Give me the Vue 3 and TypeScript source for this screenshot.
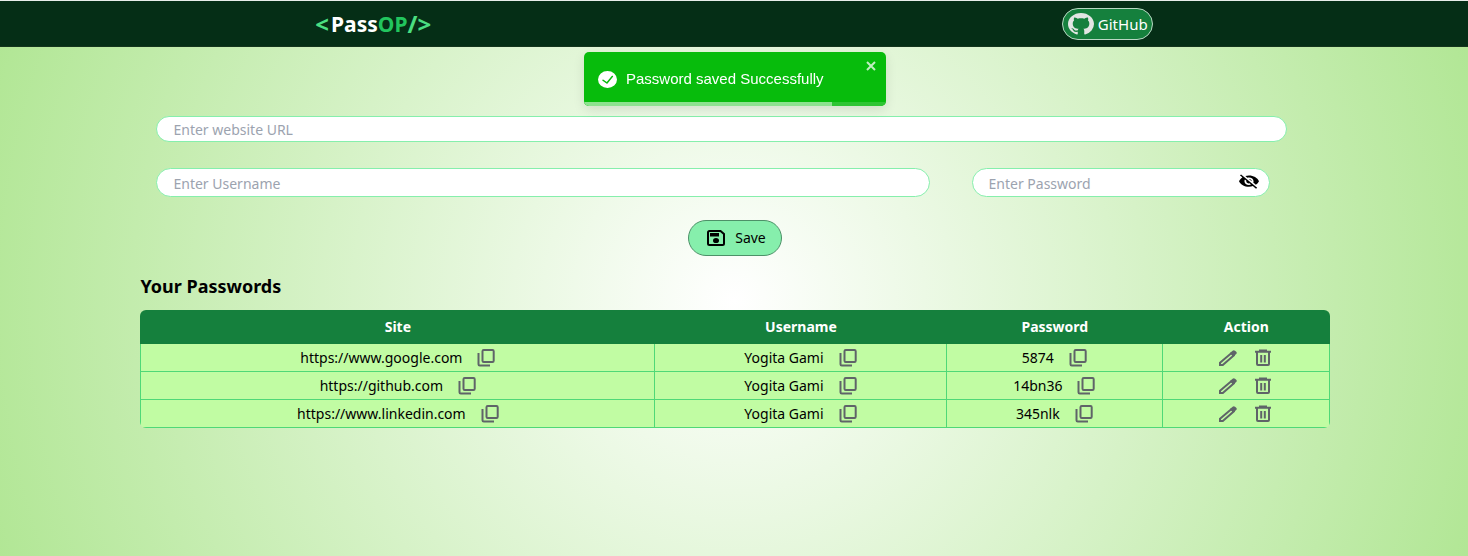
<script setup lang="ts">
import { ref } from 'vue'

interface Entry {
  site: string
  username: string
  password: string
}

const form = ref<Entry>({ site: '', username: '', password: '' })
const columns = ['Site', 'Username', 'Password', 'Action']
const fields: (keyof Entry)[] = ['site', 'username', 'password']
const entries = ref<Entry[]>([
  { site: 'https://www.google.com', username: 'Yogita Gami', password: '5874' },
  { site: 'https://github.com', username: 'Yogita Gami', password: '14bn36' },
  { site: 'https://www.linkedin.com', username: 'Yogita Gami', password: '345nlk' },
])
</script>

<template>
  <div class="page">
    <header class="nav">
      <div class="logo"><span class="bracket open">&lt;</span>Pass<span class="op">OP</span><span class="bracket">/&gt;</span></div>
      <button class="github" type="button">
        <svg class="github-icon" viewBox="0 0 16 16" preserveAspectRatio="none" aria-hidden="true">
          <path d="M8 0C3.58 0 0 3.58 0 8c0 3.54 2.29 6.53 5.47 7.59.4.07.55-.17.55-.38 0-.19-.01-.82-.01-1.49-2.01.37-2.53-.49-2.69-.94-.09-.23-.48-.94-.82-1.13-.28-.15-.68-.52-.01-.53.63-.01 1.08.58 1.23.82.72 1.21 1.87.87 2.33.66.07-.52.28-.87.51-1.07-1.78-.2-3.64-.89-3.64-3.95 0-.87.31-1.59.82-2.15-.08-.2-.36-1.02.08-2.12 0 0 .67-.21 2.2.82.64-.18 1.32-.27 2-.27s1.36.09 2 .27c1.53-1.04 2.2-.82 2.2-.82.44 1.1.16 1.92.08 2.12.51.56.82 1.27.82 2.15 0 3.07-1.87 3.75-3.65 3.95.29.25.54.73.54 1.48 0 1.07-.01 1.93-.01 2.2 0 .21.15.46.55.38A8.01 8.01 0 0 0 16 8c0-4.42-3.58-8-8-8z" />
        </svg>
        <span>GitHub</span>
      </button>
    </header>

    <div class="toast" role="status">
      <svg class="toast-check" viewBox="0 0 24 24" preserveAspectRatio="none" aria-hidden="true">
        <path d="M12 0a12 12 0 1 0 12 12A12 12 0 0 0 12 0zm6.93 8.2-6.85 9.29a1 1 0 0 1-1.43.19l-4.89-3.91a1 1 0 0 1-.15-1.41A1 1 0 0 1 7 12.21l4.08 3.26L17.32 7a1 1 0 0 1 1.39-.22 1 1 0 0 1 .22 1.42z" />
      </svg>
      <span>Password saved Successfully</span>
      <button class="toast-close" type="button" aria-label="Close">
        <svg viewBox="0 0 10 10" aria-hidden="true"><path d="M1 1l8 8M9 1L1 9" /></svg>
      </button>
      <div class="progress"><div class="progress-bar"></div></div>
    </div>

    <main class="content">
      <form class="form" @submit.prevent>
        <input v-model="form.site" class="field site" type="text" placeholder="Enter website URL" aria-label="Website URL" />
        <div class="row">
          <input v-model="form.username" class="field" type="text" placeholder="Enter Username" aria-label="Username" />
          <div class="password">
            <input v-model="form.password" class="field" type="password" placeholder="Enter Password" aria-label="Password" />
            <button class="eye" type="button" aria-label="Show password">
              <svg viewBox="0 0 22 20" preserveAspectRatio="none" aria-hidden="true">
                <path d="M11 4.500c2.760 0 5 2.240 5 5 0 .65-.13 1.260-.36 1.830l2.920 2.920c1.510-1.260 2.700-2.890 3.430-4.750-1.730-4.390-6-7.500-11-7.500-1.400 0-2.740.25-3.980.7l2.160 2.160c.57-.23 1.180-.36 1.830-.36zM1 1.770l2.280 2.280.46.46C2.080 5.800.78 7.520 0 9.500c1.730 4.390 6 7.500 11 7.500 1.550 0 3.030-.3 4.380-.84l.42.42L18.730 19.500 20 18.230 2.270.5 1 1.770zm5.530 5.530l1.550 1.550c-.05.21-.08.43-.08.65 0 1.660 1.340 3 3 3 .22 0 .44-.03.65-.08l1.550 1.550c-.67.33-1.410.53-2.200.53-2.760 0-5-2.240-5-5 0-.79.2-1.530.53-2.200zm4.310-.78l3.150 3.150.02-.16c0-1.660-1.340-3-3-3l-.17.01z" />
              </svg>
            </button>
          </div>
        </div>
        <button class="save" type="submit">
          <svg viewBox="0 0 18 16" aria-hidden="true">
            <path class="disk" d="M2.500 1h11L17 4v9.500a1.500 1.500 0 0 1-1.500 1.500h-13A1.500 1.500 0 0 1 1 13.500v-11A1.500 1.500 0 0 1 2.500 1z" />
            <path d="M3 3h9v3.500H3z" />
            <ellipse cx="9" cy="10.500" rx="3" ry="2.600" />
          </svg>
          <span>Save</span>
        </button>
      </form>

      <h2 class="title">Your Passwords</h2>
      <table class="table">
        <thead>
          <tr>
            <th v-for="column in columns" :key="column" scope="col">{{ column }}</th>
          </tr>
        </thead>
        <tbody>
          <tr v-for="entry in entries" :key="entry.site">
            <td v-for="field in fields" :key="field">
              <div class="cell">
                <a v-if="field === 'site'" :href="entry.site">{{ entry.site }}</a>
                <span v-else>{{ entry[field] }}</span>
                <button class="icon" type="button" :aria-label="`Copy ${field}`">
                  <svg viewBox="0 0 18 18" aria-hidden="true">
                    <rect x="5.500" y="1" width="11.200" height="12" rx="1.200" />
                    <path d="M1.500 4v11.200q0 1.300 1.300 1.300H13" />
                  </svg>
                </button>
              </div>
            </td>
            <td>
              <div class="cell actions">
                <button class="icon" type="button" aria-label="Edit">
                  <svg viewBox="0 0 18 18" aria-hidden="true">
                    <path d="M1 13.800 12.200 4.200l2.500 2.200L3.800 16H1z" />
                    <path class="solid" d="M11 4 13.600 1.700q1.200-1 2.400 0l1.200 1.100q1.100 1.100 0 2.200L14.700 7.300z" />
                  </svg>
                </button>
                <button class="icon" type="button" aria-label="Delete">
                  <svg viewBox="0 0 18 18" aria-hidden="true">
                    <path d="M1 2.800h16M6 2V1.500h6V2M3 3v12q0 1 1 1h10q1 0 1-1V3M7.200 6v7.500M10.800 6v7.500" />
                  </svg>
                </button>
              </div>
            </td>
          </tr>
        </tbody>
      </table>
    </main>
  </div>
</template>

<style>
body {
  margin: 0;
}
</style>

<style scoped>
* {
  box-sizing: border-box;
}

.page {
  min-height: 100vh;
  border-top: 1px solid #e9eeea;
  background: radial-gradient(circle at 50% 54%, #fff, #b0e693);
  color: #000;
  font-family: "Noto Sans", "Open Sans", sans-serif;
  font-size: 14px;
  line-height: 20px;
}

button,
input {
  margin: 0;
  font: inherit;
  color: inherit;
}

button {
  padding: 0;
  border: 0;
  background: none;
  cursor: pointer;
}

svg {
  display: block;
}

.nav {
  display: flex;
  justify-content: space-around;
  align-items: center;
  height: 46px;
  background: #052e16;
  border-bottom: 1px solid #14351d;
  color: #fff;
}

.logo {
  display: flex;
  align-items: center;
  font-size: 21px;
  line-height: 24px;
  font-weight: 700;
}

.bracket {
  color: #4ade80;
  font-size: 24px;
}

.open {
  padding-right: 2px;
}

.op {
  color: #22c55e;
}

.github {
  display: flex;
  align-items: center;
  gap: 4px;
  height: 32px;
  padding: 0 4px 0 5px;
  border: 1px solid #b9d8c4;
  border-radius: 16px;
  background: #15803d;
  font-size: 15px;
}

.github-icon {
  width: 26px;
  height: 22px;
  fill: #e2e5e3;
}

.toast {
  position: fixed;
  top: 52px;
  left: calc(50% + 1px);
  width: 302px;
  height: 54px;
  padding: 0 14px;
  display: flex;
  align-items: center;
  gap: 9px;
  transform: translateX(-50%);
  overflow: hidden;
  border-radius: 5px;
  background: #07bc0c;
  box-shadow: 0 4px 12px rgba(0, 0, 0, 0.1);
  color: #fff;
  font-family: "Liberation Sans", Arial, sans-serif;
  font-size: 15px;
}

.toast-check {
  width: 19px;
  height: 17px;
  fill: #fff;
}

.toast-close {
  position: absolute;
  top: 9px;
  right: 10px;
}

.toast-close svg {
  width: 10px;
  height: 10px;
  fill: none;
  stroke: #c1eec2;
  stroke-width: 2;
}

.progress {
  position: absolute;
  inset: auto 0 0;
  height: 4px;
  background: #2fc534;
}

.progress-bar {
  width: 82%;
  height: 100%;
  background: #8de28f;
}

.content {
  width: 81%;
  margin-left: calc(9.5% + 1px);
  padding-top: 69px;
}

.form {
  display: flex;
  flex-direction: column;
  padding-left: 16px;
}

.field {
  width: 100%;
  height: 29px;
  padding: 1px 16px 0;
  border: 1px solid #86efac;
  border-radius: 15px;
  background: #fff;
  outline: none;
}

.field::placeholder {
  color: #9ca3af;
  opacity: 1;
}

.site {
  width: calc(100% - 43px);
  height: 26px;
}

.row {
  display: grid;
  grid-template-columns: 773fr 298fr;
  gap: 42px;
  width: calc(100% - 60px);
  margin-top: 26px;
}

.password {
  position: relative;
}

.eye {
  position: absolute;
  top: 6px;
  right: 11px;
}

.eye svg {
  width: 20px;
  height: 15px;
}

.save {
  display: flex;
  align-items: center;
  align-self: center;
  gap: 10px;
  height: 36px;
  margin-top: 23px;
  margin-right: 16px;
  padding: 0 15px 0 18px;
  border: 1px solid #4d9168;
  border-radius: 18px;
  background: #86efac;
}

.save svg {
  width: 18px;
  height: 16px;
}

.disk {
  fill: none;
  stroke: #000;
  stroke-width: 2;
}

.title {
  margin: 18px 0 12px;
  font-size: 18px;
  line-height: 24px;
  font-weight: 700;
}

.table {
  width: 100%;
  table-layout: fixed;
  border-spacing: 0;
  overflow: hidden;
  border-radius: 6px;
}

th {
  height: 34px;
  padding: 0;
  background: #15803d;
  color: #fff;
  font-weight: 700;
}

th:nth-child(1) {
  width: 43.300%;
}

th:nth-child(2) {
  width: 24.500%;
}

th:nth-child(3) {
  width: 18.200%;
}

td {
  height: 28px;
  padding: 0;
  border-right: 1px solid #4fd877;
  border-bottom: 1px solid #4fd877;
  background: #c1fca3;
}

td:first-child {
  border-left: 1px solid #4fd877;
}

.cell {
  display: flex;
  align-items: center;
  justify-content: center;
  gap: 15px;
}

.cell a {
  color: inherit;
  text-decoration: none;
}

.actions {
  gap: 17px;
}

.icon svg {
  width: 18px;
  height: 18px;
  fill: none;
  stroke: #5f6468;
  stroke-width: 2;
}

.icon .solid {
  fill: #5f6468;
  stroke: none;
}
</style>
